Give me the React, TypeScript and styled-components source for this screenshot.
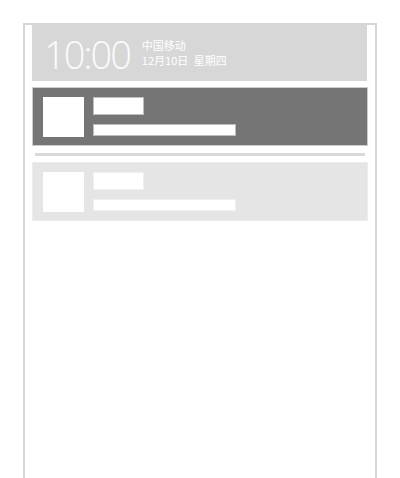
import styled, { createGlobalStyle } from 'styled-components';

const GlobalStyle = createGlobalStyle`
  html, body {
    margin: 0;
    padding: 0;
    background: #fff;
  }
  body {
    font-family: 'Noto Sans', 'Noto Sans CJK SC', sans-serif;
  }
`;

const StPhoneFrame = styled.div`
  box-sizing: border-box;
  width: 354px;
  min-height: 455px;
  margin: 23px 0 0 23px;
  padding: 0 7px 0 7px;
  border: 2px solid #d6d6d6;
  border-bottom: none;
  display: flex;
  flex-direction: column;
`;

const StLockHeader = styled.div`
  box-sizing: border-box;
  width: 335px;
  height: 56px;
  background: #d7d7d7;
  display: flex;
  align-items: center;
  padding-left: 12px;
  gap: 12px;
`;

const StClock = styled.div`
  font-family: 'Open Sans', 'Liberation Sans', sans-serif;
  font-weight: 300;
  font-size: 38px;
  letter-spacing: -2px;
  line-height: 1;
  color: #fbfbfb;
  margin-top: 2px;
`;

const StCarrier = styled.div`
  display: flex;
  flex-direction: column;
  font-family: 'Noto Sans CJK SC', sans-serif;
  font-size: 11px;
  line-height: 15px;
  word-spacing: 3px;
  color: #fff;
`;

const StNotice = styled.div<{ $active?: boolean }>`
  box-sizing: border-box;
  width: 336px;
  height: 59px;
  margin-top: 6px;
  padding: 9px 10px;
  display: flex;
  gap: 9px;
  background: ${({ $active }) => ($active ? '#757575' : '#e5e5e5')};
  border: 1px solid ${({ $active }) => ($active ? '#cdcdcd' : '#ececec')};
`;

const StIcon = styled.div`
  width: 41px;
  height: 40px;
  background: #fff;
  flex-shrink: 0;
`;

const StLines = styled.div`
  display: flex;
  flex-direction: column;
  gap: 9px;
`;

const StBar = styled.div<{ $w: number; $h: number; $active?: boolean }>`
  box-sizing: border-box;
  width: ${({ $w }) => $w}px;
  height: ${({ $h }) => $h}px;
  background: #fff;
  border: 1px solid ${({ $active }) => ($active ? '#bdbdbd' : '#efefef')};
`;

const StDivider = styled.div`
  height: 3px;
  margin: 7px 3px 0;
  background: #d9d9d9;
`;

const Notice = ({ active }: { active?: boolean }) => (
  <StNotice $active={active}>
    <StIcon />
    <StLines>
      <StBar $w={51} $h={19} $active={active} />
      <StBar $w={143} $h={13} $active={active} />
    </StLines>
  </StNotice>
);

const App = () => {
  return (
    <>
      <GlobalStyle />
      <StPhoneFrame>
        <StLockHeader>
          <StClock>10:00</StClock>
          <StCarrier>
            <span>中国移动</span>
            <span>12月10日 星期四</span>
          </StCarrier>
        </StLockHeader>
        <Notice active />
        <StDivider />
        <Notice />
      </StPhoneFrame>
    </>
  );
};

export default App;
